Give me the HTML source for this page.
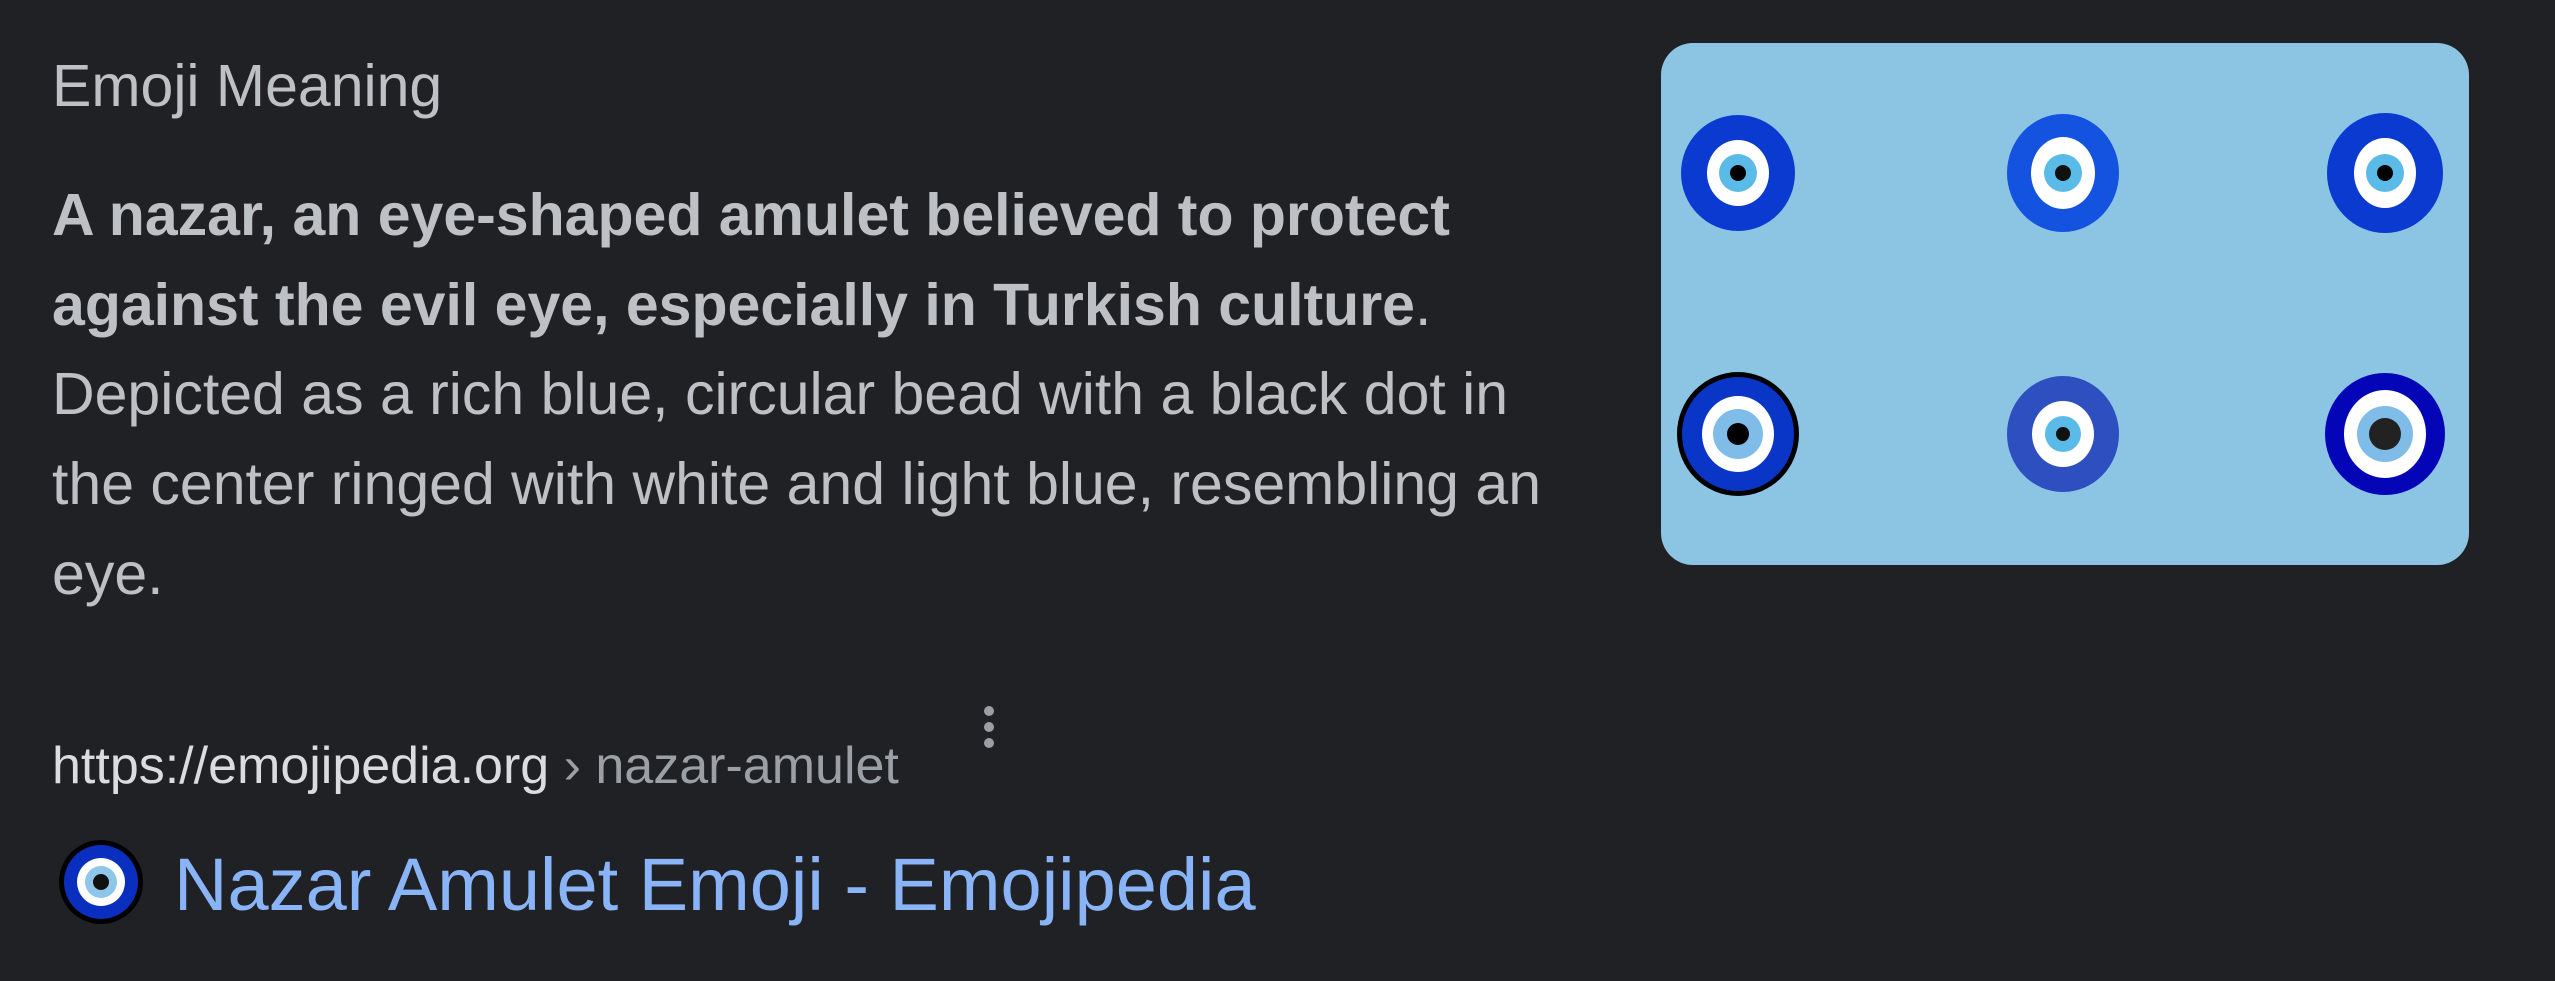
<!DOCTYPE html>
<html><head><meta charset="utf-8"><style>
html,body{margin:0;padding:0;background:#202124;width:2555px;height:981px;overflow:hidden;font-family:"Liberation Sans",Arial,sans-serif;}
.a{position:absolute;white-space:nowrap;}
.h{left:52px;top:57px;font-size:59px;line-height:59px;color:#bdc1c6;}
.b{left:52px;top:171px;font-size:59px;line-height:89.7px;color:#bdc1c6;}
.b b{color:#bdc1c6;}
.u{left:52px;top:740px;font-size:52px;line-height:52px;color:#dadce0;}
.u span{color:#9aa0a6;}
.t{left:174px;top:848px;font-size:74px;line-height:74px;color:#8ab4f8;}
.panel{position:absolute;left:1661px;top:43px;width:808px;height:522px;background:#8cc5e4;border-radius:32px;}
</style></head><body>
<div class="a h">Emoji Meaning</div>
<div class="a b"><b>A nazar, an eye-shaped amulet believed to protect</b><br><b>against the evil eye, especially in Turkish culture</b>.<br>Depicted as a rich blue, circular bead with a black dot in<br>the center ringed with white and light blue, resembling an<br>eye.</div>
<div class="a u">https://emojipedia.org <span>› nazar-amulet</span></div>
<svg class="a" style="left:976px;top:703px" width="26" height="52"><circle cx="13" cy="8" r="5" fill="#9aa0a6"/><circle cx="13" cy="24" r="5" fill="#9aa0a6"/><circle cx="13" cy="40" r="5" fill="#9aa0a6"/></svg>
<svg class="a" style="left:58px;top:839px" width="86" height="86"><circle cx="43" cy="43" r="42" fill="#000"/><circle cx="43" cy="43" r="37" fill="#0a2fbf"/><circle cx="43" cy="43" r="24" fill="#fff"/><circle cx="43" cy="43" r="16" fill="#8ec6ea"/><circle cx="43" cy="43" r="8" fill="#111"/></svg>
<div class="a t">Nazar Amulet Emoji - Emojipedia</div>
<div class="panel"></div>
<svg class="a" style="left:1661px;top:43px" width="808" height="522">
<g transform="translate(77,130)"><ellipse rx="57" ry="58" fill="#0b3ad0"/><ellipse rx="31" ry="33" fill="#fff"/><circle r="19" fill="#5bbbe8"/><circle r="8" fill="#000"/></g>
<g transform="translate(402,130)"><ellipse rx="56" ry="59" fill="#1452e0"/><ellipse rx="32" ry="36" fill="#fff"/><circle r="19" fill="#5bbbe8"/><circle r="8" fill="#111"/></g>
<g transform="translate(724,130)"><ellipse rx="58" ry="60" fill="#0b3ad0"/><ellipse rx="31" ry="35" fill="#fff"/><circle r="19" fill="#5bbbe8"/><circle r="8" fill="#000"/></g>
<g transform="translate(77,391)"><ellipse rx="61" ry="62" fill="#000"/><ellipse rx="56" ry="57" fill="#0a36c8"/><ellipse rx="36" ry="38" fill="#fff"/><circle r="25" fill="#7fbde8"/><circle r="11" fill="#000"/></g>
<g transform="translate(402,391)"><ellipse cx="0" cy="0" rx="56" ry="58" fill="#2e4fc0"/><ellipse rx="31" ry="33" fill="#fff"/><circle r="18" fill="#5bbbe8"/><circle r="7" fill="#111"/></g>
<g transform="translate(724,391)"><ellipse rx="60" ry="61" fill="#0505b8"/><ellipse rx="41" ry="44" fill="#fff"/><circle r="28" fill="#7fbde8"/><circle r="16" fill="#222"/></g>
</svg>
</body></html>
